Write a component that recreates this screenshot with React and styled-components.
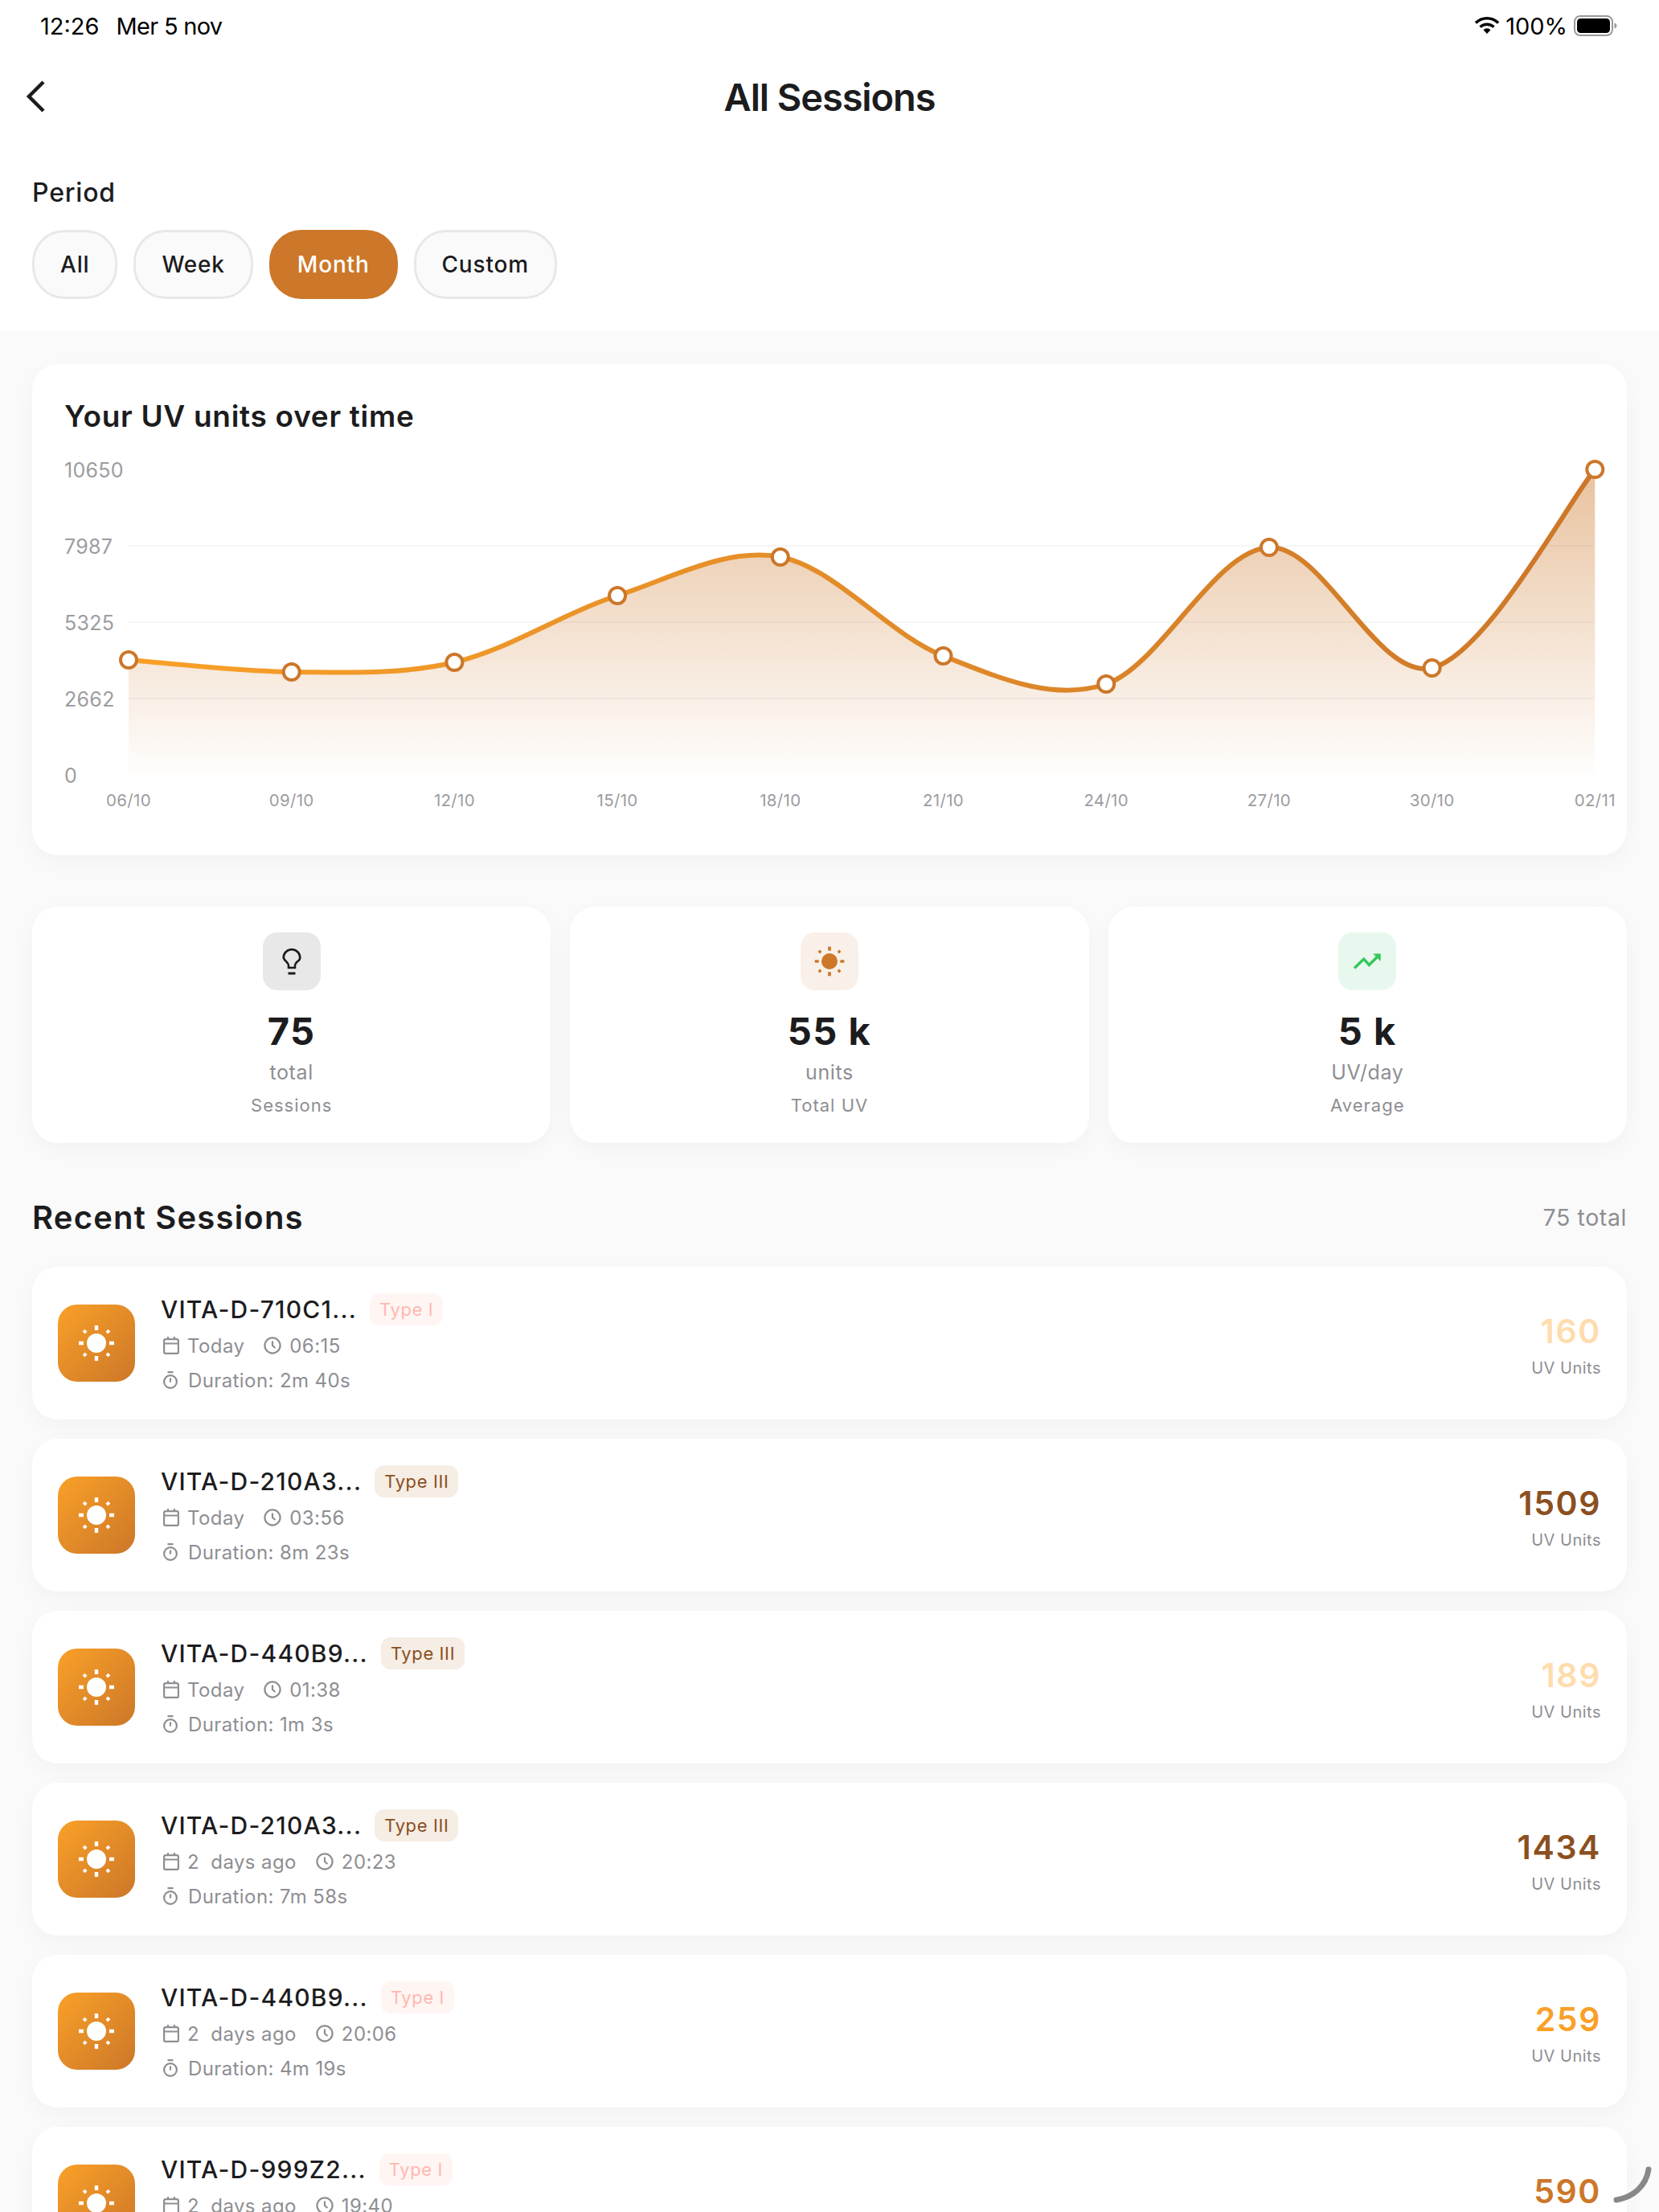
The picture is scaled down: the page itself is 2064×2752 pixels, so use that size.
import React from "react";
import styled, { createGlobalStyle } from "styled-components";

const GlobalStyle = createGlobalStyle`
	html, body {
		margin: 0;
		padding: 0;
		background: #fafafa;
	}
	* {
		box-sizing: border-box;
	}
`;

const Page = styled.div`
	position: relative;
	width: 2064px;
	height: 2752px;
	overflow: hidden;
	background: #fafafa;
	font-family: Inter, "Liberation Sans", sans-serif;
	color: #1c1c1e;
`;

const Header = styled.header`
	height: 412px;
	background: #ffffff;
`;

const StatusBar = styled.div`
	display: flex;
	align-items: center;
	justify-content: space-between;
	height: 64px;
	padding: 0 52px 0 50px;
	font-size: 29px;
	color: #000000;
`;

const StatusGroup = styled.div`
	display: flex;
	align-items: center;
	gap: ${(p) => p.$gap}px;
`;

const StatusDate = styled.span`
	letter-spacing: -0.7px;
`;

const NavBar = styled.div`
	display: flex;
	align-items: center;
	justify-content: center;
	position: relative;
	height: 112px;
	margin-bottom: 2px;
`;

const BackButton = styled.div`
	position: absolute;
	left: 30px;
	top: 34px;
	display: flex;
`;

const Title = styled.h1`
	margin: 0;
	font-size: 47px;
	font-weight: 600;
	letter-spacing: -1.1px;
`;

const PeriodBlock = styled.section`
	padding: 42px 40px 0;
`;

const PeriodLabel = styled.div`
	height: 40px;
	line-height: 40px;
	font-size: 32px;
	font-weight: 500;
	letter-spacing: 0.8px;
	margin-bottom: 26px;
`;

const Pills = styled.div`
	display: flex;
	gap: 20px;
`;

const Pill = styled.div`
	display: flex;
	align-items: center;
	height: 86px;
	padding: 0 32px;
	border-radius: 40px;
	border: 3px solid ${(p) => (p.$active ? "#cc7729" : "#e8e8ec")};
	background: ${(p) => (p.$active ? "#cc7729" : "#fafafa")};
	color: ${(p) => (p.$active ? "#ffffff" : "#1c1c1e")};
	font-size: 28px;
	font-weight: 500;
	letter-spacing: 0.8px;
`;

const Content = styled.main`
	padding: 41px 40px 0;
`;

const Card = styled.div`
	background: #ffffff;
	border-radius: 32px;
	box-shadow: 0 8px 28px rgba(0, 0, 0, 0.035);
`;

const ChartCard = styled(Card)`
	height: 611px;
`;

const ChartTitle = styled.h2`
	margin: 0;
	padding: 43px 40px 0;
	height: 107px;
	line-height: 44px;
	font-size: 37px;
	font-weight: 600;
	letter-spacing: 0.7px;
`;

const ChartSvg = styled.svg`
	display: block;
`;

const AxisText = styled.text`
	font-family: Inter, "Liberation Sans", sans-serif;
	font-size: ${(p) => p.$size}px;
	fill: #9c9ca1;
	letter-spacing: 0.3px;
`;

const StatsRow = styled.div`
	display: grid;
	grid-template-columns: repeat(3, 1fr);
	gap: 24px;
	margin-top: 64px;
`;

const StatCard = styled(Card)`
	display: flex;
	flex-direction: column;
	align-items: center;
	height: 294px;
	padding-top: 32px;
`;

const StatIcon = styled.div`
	display: flex;
	align-items: center;
	justify-content: center;
	width: 72px;
	height: 72px;
	border-radius: 18px;
	background: ${(p) => p.$bg};
	color: ${(p) => p.$color};
`;

const StatValue = styled.div`
	margin-top: 22px;
	height: 58px;
	line-height: 58px;
	font-size: 47px;
	font-weight: 700;
	letter-spacing: 1.5px;
`;

const StatUnit = styled.div`
	margin-top: 4px;
	height: 36px;
	line-height: 36px;
	font-size: 25px;
	letter-spacing: 0.6px;
	color: #8e8e93;
`;

const StatLabel = styled.div`
	margin-top: 7px;
	height: 32px;
	line-height: 32px;
	font-size: 22px;
	letter-spacing: 1px;
	color: #8e8e93;
`;

const SectionHeader = styled.div`
	display: flex;
	align-items: center;
	justify-content: space-between;
	height: 50px;
	margin: 67px 0 37px;
`;

const SectionTitle = styled.h2`
	margin: 0;
	font-size: 40px;
	font-weight: 600;
	letter-spacing: 1.2px;
`;

const SectionCount = styled.span`
	font-size: 28.5px;
	letter-spacing: 0.6px;
	color: #8e8e93;
`;

const Rows = styled.div`
	display: flex;
	flex-direction: column;
	gap: 24px;
`;

const Row = styled(Card)`
	flex: none;
	display: flex;
	align-items: center;
	height: 190px;
	padding: 0 32px;
`;

const SunTile = styled.div`
	flex: none;
	display: flex;
	align-items: center;
	justify-content: center;
	width: 96px;
	height: 96px;
	border-radius: 24px;
	background: linear-gradient(135deg, #f9a028, #cc7729);
	color: #ffffff;
`;

const RowInfo = styled.div`
	flex: 1;
	display: flex;
	flex-direction: column;
	margin-left: 32px;
`;

const NameLine = styled.div`
	display: flex;
	align-items: center;
	gap: 16px;
	height: 40px;
`;

const Name = styled.span`
	font-size: 30px;
	font-weight: 500;
	letter-spacing: 1.2px;
`;

const Badge = styled.span`
	display: flex;
	align-items: center;
	height: 40px;
	padding: 0 12px;
	border-radius: 12px;
	font-size: 22px;
	letter-spacing: 0.6px;
	background: ${(p) => (p.$kind === "I" ? "#fff5f3" : "#f6ede5")};
	color: ${(p) => (p.$kind === "I" ? "#ffb8b0" : "#8b4f20")};
`;

const MetaLine = styled.div`
	display: flex;
	align-items: center;
	height: 32px;
	margin-top: ${(p) => p.$top}px;
	font-size: 24px;
	letter-spacing: 0.4px;
	color: #8e8e93;
	white-space: pre;
`;

const MetaItem = styled.span`
	display: flex;
	align-items: center;
	margin-right: 24px;
`;

const MetaSvg = styled.svg`
	flex: none;
	margin: 0 ${(p) => p.$right}px 0 ${(p) => p.$left}px;
	fill: none;
	stroke: #8e8e93;
	stroke-width: 2.2;
`;

const RowValue = styled.div`
	display: flex;
	flex-direction: column;
	align-items: flex-end;
	padding-top: 5px;
`;

const UvNumber = styled.div`
	height: 52px;
	line-height: 52px;
	font-size: 41px;
	font-weight: 600;
	letter-spacing: 1.6px;
	color: ${(p) => p.$color};
`;

const UvLabel = styled.div`
	margin-top: 5px;
	height: 30px;
	line-height: 30px;
	font-size: 20px;
	letter-spacing: 0.5px;
	color: #8e8e93;
`;

const ScrollArc = styled.svg`
	position: absolute;
	right: 8px;
	bottom: 8px;
`;

const CalendarIcon = () => (
	<MetaSvg $left={3} $right={10} width="20" height="22" viewBox="0 0 20 22">
		<rect x="1.1" y="3.1" width="17.8" height="17.8" rx="2" />
		<path d="M1 8.500h18M6 0v4M14 0v4" />
	</MetaSvg>
);

const ClockIcon = () => (
	<MetaSvg $left={0} $right={10} width="22" height="22" viewBox="0 0 22 22">
		<circle cx="11" cy="11" r="9.6" />
		<path d="M11 5.500V11l3.500 3" />
	</MetaSvg>
);

const TimerIcon = () => (
	<MetaSvg $left={3} $right={13} width="18" height="22" viewBox="0 0 18 22">
		<path d="M5.500 1.200h7M9 8.500v5" />
		<circle cx="9" cy="13" r="7.900" />
	</MetaSvg>
);

const SunIcon = ({ size }) => (
	<svg width={size} height={size} viewBox="0 0 48 48" fill="currentColor">
		<circle cx="24" cy="24" r="12" />
		<path d="M21.800 2h4.400v6h-4.400zM21.800 40h4.400v6h-4.400zM2 21.800h6v4.400H2zM40 21.800h6v4.400h-6z" />
		<path d="M9.500 6.700l3 3-2.800 2.800-3-3zM38.500 6.700l2.800 2.800-3 3-2.800-2.800zM9.700 35.500l2.800 2.800-3 3-2.800-2.800zM38.300 35.500l3 3-2.800 2.800-3-3z" />
	</svg>
);

const BulbIcon = () => (
	<svg width="24" height="33" viewBox="0 0 24 33" fill="none" stroke="currentColor" strokeWidth="2.6">
		<path d="M8 24v-3c0-1.800-1.200-3-2.700-4.500A10.300 10.300 0 0 1 1.700 11.500a10.300 10.300 0 0 1 20.600 0c0 2-1.400 3.600-3.600 5C17.200 18 16 19.200 16 21v3Z" />
		<path d="M7.500 31h9" strokeWidth="3" />
	</svg>
);

const TrendIcon = () => (
	<svg width="40" height="40" viewBox="0 0 40 40" fill="none" stroke="currentColor" strokeWidth="3.4">
		<path d="M4 28.500 15.700 17.200 22.300 24.500 33 14" />
		<path d="M27.300 10.500h9.400v9.400Z" fill="currentColor" stroke="none" />
	</svg>
);

const CHART_W = 1984;
const CHART_H = 480;
const BASE_Y = 404;
const dates = ["06/10", "09/10", "12/10", "15/10", "18/10", "21/10", "24/10", "27/10", "30/10", "02/11"];
const levels = [261, 276, 264, 181, 133, 256, 291, 121, 271, 24];
const points = levels.map((y, i) => ({ x: 120 + i * 202.7, y }));
const yLabels = [
	["10650", 25],
	["7987", 120],
	["5325", 215],
	["2662", 310],
	["0", 405],
];

// catmull-rom through the points, that is how the curve overshoots before a peak
const buildLine = (pts) => {
	let d = `M${pts[0].x} ${pts[0].y}`;
	for (let i = 0; i < pts.length - 1; i++) {
		const p0 = pts[i - 1] || pts[i];
		const p1 = pts[i];
		const p2 = pts[i + 1];
		const p3 = pts[i + 2] || p2;
		const c1x = p1.x + (p2.x - p0.x) / 6;
		const c1y = p1.y + (p2.y - p0.y) / 6;
		const c2x = p2.x - (p3.x - p1.x) / 6;
		const c2y = p2.y - (p3.y - p1.y) / 6;
		d += ` C${c1x} ${c1y} ${c2x} ${c2y} ${p2.x} ${p2.y}`;
	}
	return d;
};

const linePath = buildLine(points);
const areaPath = `${linePath} L${points[9].x} ${BASE_Y} L${points[0].x} ${BASE_Y} Z`;

const Chart = () => (
	<ChartSvg width={CHART_W} height={CHART_H} viewBox={`0 0 ${CHART_W} ${CHART_H}`}>
		<defs>
			<linearGradient id="areaFill" gradientUnits="userSpaceOnUse" x1="0" y1="24" x2="0" y2={BASE_Y}>
				<stop offset="0" stopColor="#cc7729" stopOpacity="0.45" />
				<stop offset="1" stopColor="#cc7729" stopOpacity="0.01" />
			</linearGradient>
			<linearGradient id="lineStroke" gradientUnits="userSpaceOnUse" x1="120" y1="0" x2="1943" y2="0">
				<stop offset="0" stopColor="#f9a028" />
				<stop offset="1" stopColor="#cc7729" />
			</linearGradient>
		</defs>
		{[119, 214, 309].map((y) => (
			<line key={y} x1="120" x2="1943" y1={y} y2={y} stroke="#f5f5f5" strokeWidth="2" />
		))}
		<path d={areaPath} fill="url(#areaFill)" />
		<path d={linePath} fill="none" stroke="url(#lineStroke)" strokeWidth="6" />
		{points.map((p) => (
			<circle key={p.x} cx={p.x} cy={p.y} r="10" fill="#ffffff" stroke="#cc7729" strokeWidth="4" />
		))}
		{yLabels.map(([label, y]) => (
			<AxisText key={label} $size={25} x="40" y={y} dominantBaseline="central">
				{label}
			</AxisText>
		))}
		{points.map((p, i) => (
			<AxisText key={dates[i]} $size={20.5} x={p.x} y="435" textAnchor="middle" dominantBaseline="central">
				{dates[i]}
			</AxisText>
		))}
	</ChartSvg>
);

const sessions = [
	{ name: "VITA-D-710C1...", type: "I", day: "Today", time: "06:15", duration: "2m 40s", uv: "160", color: "#ffdcae" },
	{ name: "VITA-D-210A3...", type: "III", day: "Today", time: "03:56", duration: "8m 23s", uv: "1509", color: "#8b4f20" },
	{ name: "VITA-D-440B9...", type: "III", day: "Today", time: "01:38", duration: "1m 3s", uv: "189", color: "#ffdcae" },
	{ name: "VITA-D-210A3...", type: "III", day: "2  days ago", time: "20:23", duration: "7m 58s", uv: "1434", color: "#8b4f20" },
	{ name: "VITA-D-440B9...", type: "I", day: "2  days ago", time: "20:06", duration: "4m 19s", uv: "259", color: "#f9a028" },
	{ name: "VITA-D-999Z2...", type: "I", day: "2  days ago", time: "19:40", duration: "3m 12s", uv: "590", color: "#cc7729" },
];

const stats = [
	{ icon: <BulbIcon />, bg: "#e8e8e8", color: "#1c1c1e", value: "75", unit: "total", label: "Sessions" },
	{ icon: <SunIcon size={40} />, bg: "#f9f0e9", color: "#cc7729", value: "55 k", unit: "units", label: "Total UV" },
	{ icon: <TrendIcon />, bg: "#e9f8ee", color: "#34c759", value: "5 k", unit: "UV/day", label: "Average" },
];

const App = () => {
	return (
		<Page>
			<GlobalStyle />
			<Header>
				<StatusBar>
					<StatusGroup $gap={21}>
						<span>12:26</span>
						<StatusDate>Mer 5 nov</StatusDate>
					</StatusGroup>
					<StatusGroup $gap={8}>
						<svg width="30" height="22" viewBox="0 0 30 22">
							<path d="M1 7.500a20 20 0 0 1 28 0" fill="none" stroke="#000" strokeWidth="3.4" />
							<path d="M6.500 12.600a12.400 12.400 0 0 1 17 0" fill="none" stroke="#000" strokeWidth="3.4" />
							<path d="M10.500 16.200 15 21l4.500-4.800a6.400 6.400 0 0 0-9 0Z" fill="#000" />
						</svg>
						<span>100%</span>
						<svg width="54" height="26" viewBox="0 0 54 26">
							<rect x="1" y="1" width="47" height="24" rx="7" fill="none" stroke="#999" strokeWidth="2" />
							<rect x="4" y="4" width="41" height="18" rx="4.500" fill="#000" />
							<path d="M50.500 9.500c2 .6 3 2 3 3.500s-1 2.900-3 3.500Z" fill="#999" />
						</svg>
					</StatusGroup>
				</StatusBar>
				<NavBar>
					<BackButton>
						<svg width="30" height="44" viewBox="0 0 30 44">
							<path d="M24 4 6 22l18 18" fill="none" stroke="#1c1c1e" strokeWidth="4.500" />
						</svg>
					</BackButton>
					<Title>All Sessions</Title>
				</NavBar>
				<PeriodBlock>
					<PeriodLabel>Period</PeriodLabel>
					<Pills>
						<Pill>All</Pill>
						<Pill>Week</Pill>
						<Pill $active>Month</Pill>
						<Pill>Custom</Pill>
					</Pills>
				</PeriodBlock>
			</Header>
			<Content>
				<ChartCard>
					<ChartTitle>Your UV units over time</ChartTitle>
					<Chart />
				</ChartCard>
				<StatsRow>
					{stats.map((s) => (
						<StatCard key={s.label}>
							<StatIcon $bg={s.bg} $color={s.color}>
								{s.icon}
							</StatIcon>
							<StatValue>{s.value}</StatValue>
							<StatUnit>{s.unit}</StatUnit>
							<StatLabel>{s.label}</StatLabel>
						</StatCard>
					))}
				</StatsRow>
				<SectionHeader>
					<SectionTitle>Recent Sessions</SectionTitle>
					<SectionCount>75 total</SectionCount>
				</SectionHeader>
				<Rows>
					{sessions.map((s, i) => (
						<Row key={i}>
							<SunTile>
								<SunIcon size={48} />
							</SunTile>
							<RowInfo>
								<NameLine>
									<Name>{s.name}</Name>
									<Badge $kind={s.type}>Type {s.type}</Badge>
								</NameLine>
								<MetaLine $top={9}>
									<MetaItem>
										<CalendarIcon />
										{s.day}
									</MetaItem>
									<MetaItem>
										<ClockIcon />
										{s.time}
									</MetaItem>
								</MetaLine>
								<MetaLine $top={11}>
									<TimerIcon />
									Duration: {s.duration}
								</MetaLine>
							</RowInfo>
							<RowValue>
								<UvNumber $color={s.color}>{s.uv}</UvNumber>
								<UvLabel>UV Units</UvLabel>
							</RowValue>
						</Row>
					))}
				</Rows>
			</Content>
			<ScrollArc width="50" height="50" viewBox="0 0 50 50">
				<path d="M5 43C25 40 42 26 45 5" fill="none" stroke="#888888" strokeWidth="7" strokeLinecap="round" />
			</ScrollArc>
		</Page>
	);
};

export default App;
